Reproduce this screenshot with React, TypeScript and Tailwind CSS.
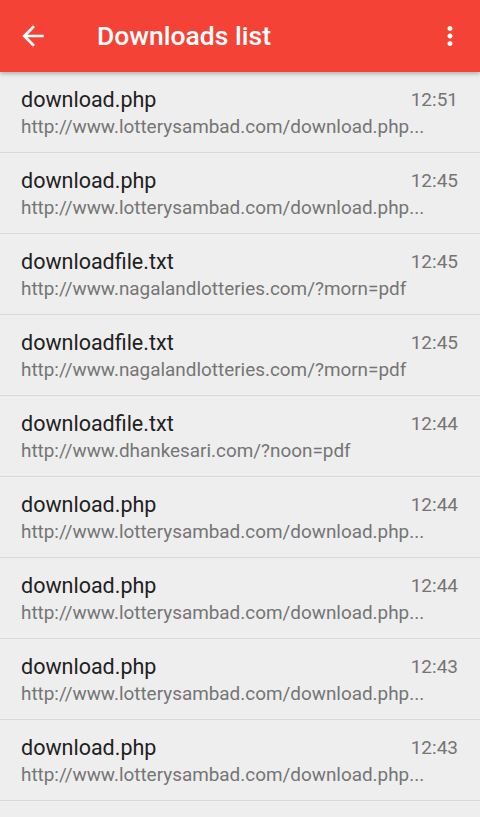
const items = [
  { name: "download.php", url: "http://www.lotterysambad.com/download.php...", time: "12:51" },
  { name: "download.php", url: "http://www.lotterysambad.com/download.php...", time: "12:45" },
  { name: "downloadfile.txt", url: "http://www.nagalandlotteries.com/?morn=pdf", time: "12:45" },
  { name: "downloadfile.txt", url: "http://www.nagalandlotteries.com/?morn=pdf", time: "12:45" },
  { name: "downloadfile.txt", url: "http://www.dhankesari.com/?noon=pdf", time: "12:44" },
  { name: "download.php", url: "http://www.lotterysambad.com/download.php...", time: "12:44" },
  { name: "download.php", url: "http://www.lotterysambad.com/download.php...", time: "12:44" },
  { name: "download.php", url: "http://www.lotterysambad.com/download.php...", time: "12:43" },
  { name: "download.php", url: "http://www.lotterysambad.com/download.php...", time: "12:43" },
];

function BackArrow() {
  return (
    <svg width="32" height="32" viewBox="0 0 24 24" fill="#fff">
      <path d="M20 11H7.83l5.59-5.59L12 4l-8 8 8 8 1.41-1.41L7.83 13H20v-2z" />
    </svg>
  );
}

function MoreVert() {
  return (
    <svg width="30" height="30" viewBox="0 0 24 24" fill="#fff">
      <path d="M12 8c1.1 0 2-.9 2-2s-.9-2-2-2-2 .9-2 2 .9 2 2 2zm0 2c-1.1 0-2 .9-2 2s.9 2 2 2 2-.9 2-2-.9-2-2-2zm0 6c-1.1 0-2 .9-2 2s.9 2 2 2 2-.9 2-2-.9-2-2-2z" />
    </svg>
  );
}

export default function App() {
  return (
    <div className="w-[480px] h-[817px] overflow-hidden bg-[#eeeeee] font-['Roboto',sans-serif]">
      <div className="relative z-10 h-[72px] bg-[#f44336] flex items-center shadow-[0_2px_4px_rgba(0,0,0,0.25)]">
        <div className="ml-[17px] w-[32px] h-[32px] flex items-center">
          <BackArrow />
        </div>
        <h1 className="ml-[48px] text-white text-[26.5px] font-medium flex-1 leading-[32px]">Downloads list</h1>
        <div className="mr-[15px] w-[30px] h-[30px]">
          <MoreVert />
        </div>
      </div>
      <div>
        {items.map((it, i) => (
          <div key={i} className="h-[81px] border-b border-[#dadada] pl-[21px] pr-[22px] flex">
            <div className="flex-1 min-w-0 pt-[15px]">
              <div className="text-[21.5px] leading-[26px] text-[#212121]">{it.name}</div>
              <div className="mt-[2px] text-[18.9px] leading-[24px] text-[#757575] whitespace-nowrap">{it.url}</div>
            </div>
            <div className="pt-[16px] text-[19px] leading-[24px] text-[#757575] w-[60px] -ml-[60px] text-right">{it.time}</div>
          </div>
        ))}
      </div>
    </div>
  );
}
